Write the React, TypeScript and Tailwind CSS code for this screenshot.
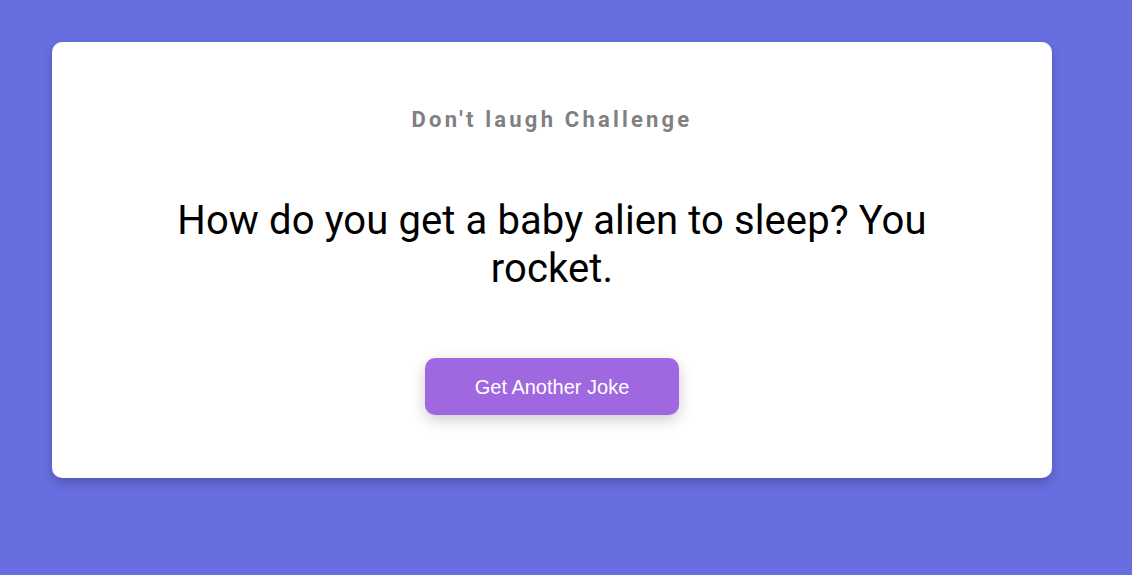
export default function App() {
  return (
    <div className="min-h-[575px] w-full bg-[#686de0] pt-[42px] pl-[52px]">
      <div className="flex w-[1000px] h-[436px] flex-col items-center rounded-[10px] bg-white px-[100px] pt-[65px] text-center shadow-[0_5px_10px_rgba(0,0,0,0.2)]">
        <h3 className="font-['Roboto',sans-serif] text-[22px] font-bold leading-[26px] tracking-[3.2px] text-[#808080]">
          Don't laugh Challenge
        </h3>
        <p className="mt-[64px] font-['Roboto',sans-serif] text-[40px] leading-[48px] tracking-[0.1px] text-black">
          How do you get a baby alien to sleep? You rocket.
        </p>
        <button className="mt-[65px] h-[57px] w-[254px] rounded-[10px] bg-[#9f68e0] font-['Liberation_Sans',Arial,sans-serif] text-[20px] text-white shadow-[0_5px_15px_rgba(0,0,0,0.2)]">
          Get Another Joke
        </button>
      </div>
    </div>
  );
}
